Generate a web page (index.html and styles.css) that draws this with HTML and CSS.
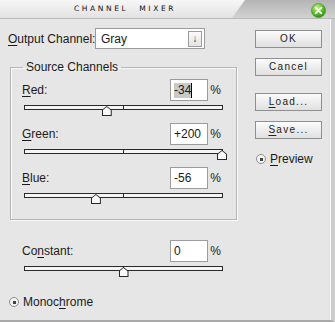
FILE: index.html
```html
<!DOCTYPE html>
<html>
<head>
    <title>Channel Mixer</title>
    <link rel="stylesheet" href="styles.css">
</head>
<body>
    <div class="window">
        <!-- Title bar with the grey tab and close button -->
        <div class="titlebar">
            <div class="title">CHANNEL MIXER</div>
            <div class="tab">
                <span class="close">
                    <svg width="15" height="15" viewBox="0 0 15 15">
                        <defs>
                            <radialGradient id="g" cx="40%" cy="30%" r="70%">
                                <stop offset="0" stop-color="#c6ef8e"/>
                                <stop offset="0.55" stop-color="#6cc23a"/>
                                <stop offset="1" stop-color="#2f8a16"/>
                            </radialGradient>
                        </defs>
                        <circle cx="7.5" cy="7.5" r="7" fill="url(#g)" stroke="#4f9a2c" stroke-width="0.8"/>
                        <path d="M4.6 4.6 L10.4 10.4 M10.4 4.6 L4.6 10.4" stroke="#fff" stroke-width="1.6" stroke-linecap="round"/>
                    </svg>
                </span>
            </div>
        </div>

        <div class="content">
            <div class="main">
                <div class="output-row">
                    <span class="label"><u>O</u>utput Channel:</span>
                    <div class="select">
                        <span>Gray</span>
                        <span class="select-btn">&#8595;</span>
                    </div>
                </div>

                <fieldset class="group">
                    <legend>Source Channels</legend>
                    <div class="row">
                        <div class="field">
                            <span class="label"><u>R</u>ed:</span>
                            <span class="num"><span class="sel">-34</span><span class="caret"></span></span>
                            <span class="pct">%</span>
                        </div>
                        <div class="slider"><span class="thumb" style="left: 41.5%"></span></div>
                    </div>
                    <div class="row">
                        <div class="field">
                            <span class="label"><u>G</u>reen:</span>
                            <span class="num">+200</span>
                            <span class="pct">%</span>
                        </div>
                        <div class="slider"><span class="thumb" style="left: 100%"></span></div>
                    </div>
                    <div class="row">
                        <div class="field">
                            <span class="label"><u>B</u>lue:</span>
                            <span class="num">-56</span>
                            <span class="pct">%</span>
                        </div>
                        <div class="slider"><span class="thumb" style="left: 36%"></span></div>
                    </div>
                </fieldset>

                <div class="row constant">
                    <div class="field">
                        <span class="label">Co<u>n</u>stant:</span>
                        <span class="num">0</span>
                        <span class="pct">%</span>
                    </div>
                    <div class="slider"><span class="thumb" style="left: 50%"></span></div>
                </div>

                <div class="radio mono">
                    <span class="dot"></span>
                    <span>Monoc<u>h</u>rome</span>
                </div>
            </div>

            <div class="side">
                <div class="btn">OK</div>
                <div class="btn">Cancel</div>
                <div class="btn gap"><u>L</u>oad...</div>
                <div class="btn"><u>S</u>ave...</div>
                <div class="radio preview">
                    <span class="dot"></span>
                    <span><u>P</u>review</span>
                </div>
            </div>
        </div>
    </div>
</body>
</html>
```

FILE: styles.css
```css
body {
    margin: 0;
    padding: 0;
    background-color: #e6e6e6;
    font-family: 'Liberation Sans', Arial, sans-serif;
    font-size: 12px;
    color: #1a1a1a;
    white-space: nowrap;
}

u {
    text-decoration-thickness: 1px;
    text-underline-offset: 2px;
}

.window {
    width: 335px;
    height: 322px;
    display: flex;
    flex-direction: column;
    overflow: hidden;
}

/* Title bar */
.titlebar {
    height: 18px;
    display: flex;
    border-bottom: 1px solid #b9b9b9;
    background: linear-gradient(to bottom, #f7f7f7, #e2e2e2);
}

.title {
    flex: 1;
    text-align: center;
    font-family: 'DejaVu Sans', sans-serif;
    font-size: 7.5px;
    line-height: 18px;
    letter-spacing: 2.6px;
    word-spacing: 6px;
    color: #111;
    padding-left: 18px;
}

.tab {
    width: 103px;
    display: flex;
    justify-content: flex-end;
    align-items: center;
    padding-right: 9px;
    box-sizing: border-box;
    clip-path: polygon(13px 0, 100% 0, 100% 100%, 0 100%);
    background: linear-gradient(to bottom, #b4b4b4, #d2d2d2);
}

.close {
    display: flex;
    margin-top: 2px;
}

/* Body area */
.content {
    flex: 1;
    display: flex;
    border-right: 4px solid #cdcdcd;
    border-bottom: 2px solid #a9a9a9;
    box-shadow: inset -1px 0 0 #f6f6f6;
}

.main {
    width: 245px;
}

.output-row {
    display: flex;
    align-items: center;
    margin: 9px 0 0 8px;
}

.output-row .label {
    width: 87px;
}

.select {
    width: 101px;
    height: 19px;
    border: 1px solid #9c9c9c;
    background-color: #fff;
    display: flex;
    align-items: center;
    justify-content: space-between;
    padding: 0 2px 0 5px;
}

.select-btn {
    width: 12px;
    height: 14px;
    border: 1px solid #9c9c9c;
    background: linear-gradient(to bottom, #fafafa, #e4e4e4);
    font-size: 10px;
    line-height: 14px;
    text-align: center;
    color: #333;
}

/* Source channels group box */
.group {
    margin: 11px 0 0 10px;
    width: 226px;
    box-sizing: border-box;
    padding: 5px 13px 8px 11px;
    border: 1px solid #b5b5b5;
    box-shadow: inset 1px 1px 0 #fafafa, 1px 1px 0 #fafafa;
}

.group legend {
    padding: 0 3px;
    margin-left: 1px;
    line-height: 14px;
}

.row {
    margin-bottom: 13px;
}

.group .row + .row {
    margin-top: 1px;
}

.field {
    display: flex;
    align-items: center;
    height: 22px;
}

.field .label {
    flex: 1;
}

.num {
    width: 33px;
    height: 20px;
    border: 1px solid #9c9c9c;
    background-color: #fff;
    padding-left: 3px;
    line-height: 20px;
    display: flex;
    align-items: center;
}

.sel {
    background-color: #c9c9c9;
    line-height: 15px;
}

.caret {
    width: 1px;
    height: 15px;
    background-color: #000;
}

.pct {
    width: 13px;
    text-align: right;
    margin-right: 2px;
}

.slider {
    position: relative;
    margin: 4px 0 0 2px;
    width: 199px;
    height: 5px;
    box-sizing: border-box;
    border: 1px solid #2a2a2a;
    background-color: #f4f4f4;
}

.slider::after {
    content: "";
    position: absolute;
    left: 98px;
    top: 0;
    width: 1px;
    height: 3px;
    background-color: #2a2a2a;
}

.thumb {
    position: absolute;
    top: 0;
    width: 10px;
    height: 10px;
    margin-left: -5px;
    background-color: #2a2a2a;
    clip-path: polygon(50% 0, 100% 40%, 100% 100%, 0 100%, 0 40%);
    z-index: 1;
}

.thumb::after {
    content: "";
    position: absolute;
    inset: 1px;
    background-color: #fafafa;
    clip-path: polygon(50% 0, 100% 40%, 100% 100%, 0 100%, 0 40%);
}

.constant {
    margin: 20px 0 0 22px;
    width: 201px;
}

/* Radio buttons */
.radio {
    display: flex;
    align-items: center;
    gap: 4px;
}

.dot {
    width: 10px;
    height: 10px;
    box-sizing: border-box;
    border-radius: 50%;
    border: 1px solid #8e8e8e;
    background-color: #f3f3f3;
    display: flex;
    align-items: center;
    justify-content: center;
}

.dot::after {
    content: "";
    width: 3px;
    height: 3px;
    background-color: #444;
}

.mono {
    margin: 24px 0 0 9px;
}

/* Right button column */
.side {
    width: 67px;
    margin-left: 10px;
    padding-top: 11px;
    display: flex;
    flex-direction: column;
    gap: 10px;
}

.btn {
    height: 18px;
    box-sizing: border-box;
    border: 1px solid #8f8f8f;
    background: linear-gradient(to bottom, #fbfbfb, #e0e0e0);
    text-align: center;
    font-size: 10px;
    line-height: 16px;
    letter-spacing: 1.3px;
    color: #222;
}

.btn.gap {
    margin-top: 7px;
}

.preview {
    margin: 3px 0 0 1px;
}
```
